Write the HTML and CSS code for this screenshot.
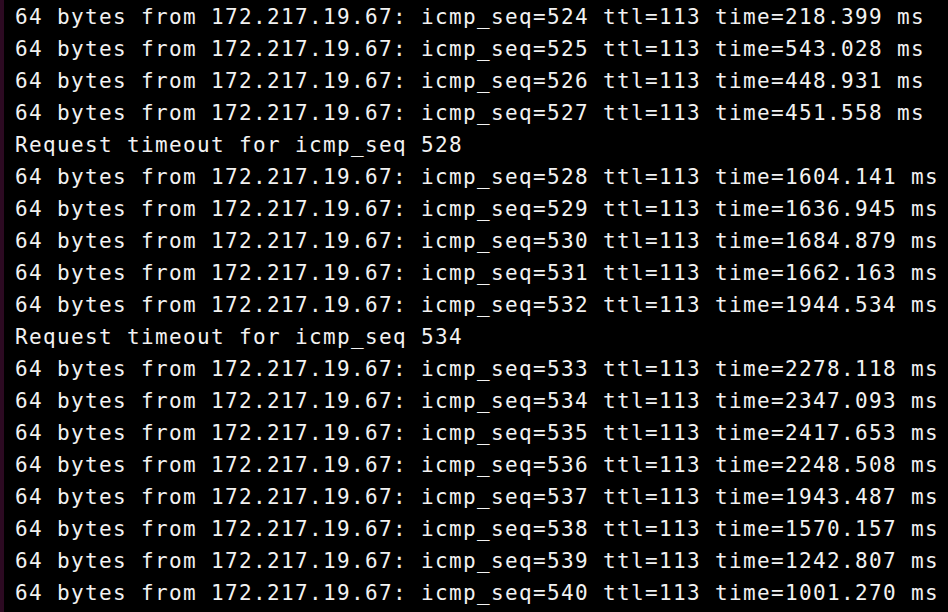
FILE: index.html
```html
<!DOCTYPE html>
<html>
<head>
<meta charset="utf-8">
<link rel="stylesheet" href="styles.css">
</head>
<body>
<div class="term">
<div class="edge"></div>
<pre class="out">64 bytes from 172.217.19.67: icmp_seq=524 ttl=113 time=218.399 ms
64 bytes from 172.217.19.67: icmp_seq=525 ttl=113 time=543.028 ms
64 bytes from 172.217.19.67: icmp_seq=526 ttl=113 time=448.931 ms
64 bytes from 172.217.19.67: icmp_seq=527 ttl=113 time=451.558 ms
Request timeout for icmp_seq 528
64 bytes from 172.217.19.67: icmp_seq=528 ttl=113 time=1604.141 ms
64 bytes from 172.217.19.67: icmp_seq=529 ttl=113 time=1636.945 ms
64 bytes from 172.217.19.67: icmp_seq=530 ttl=113 time=1684.879 ms
64 bytes from 172.217.19.67: icmp_seq=531 ttl=113 time=1662.163 ms
64 bytes from 172.217.19.67: icmp_seq=532 ttl=113 time=1944.534 ms
Request timeout for icmp_seq 534
64 bytes from 172.217.19.67: icmp_seq=533 ttl=113 time=2278.118 ms
64 bytes from 172.217.19.67: icmp_seq=534 ttl=113 time=2347.093 ms
64 bytes from 172.217.19.67: icmp_seq=535 ttl=113 time=2417.653 ms
64 bytes from 172.217.19.67: icmp_seq=536 ttl=113 time=2248.508 ms
64 bytes from 172.217.19.67: icmp_seq=537 ttl=113 time=1943.487 ms
64 bytes from 172.217.19.67: icmp_seq=538 ttl=113 time=1570.157 ms
64 bytes from 172.217.19.67: icmp_seq=539 ttl=113 time=1242.807 ms
64 bytes from 172.217.19.67: icmp_seq=540 ttl=113 time=1001.270 ms</pre>
</div>
</body>
</html>
```
FILE: styles.css
```css
html, body {
  margin: 0;
  padding: 0;
  background: #000;
  width: 948px;
  height: 612px;
  overflow: hidden;
}
.term {
  display: flex;
  height: 612px;
  background: #000;
}
.edge {
  width: 4px;
  flex: none;
  background: #2c0a22;
}
.out {
  margin: 0;
  padding: 1px 0 0 11px;
  font-family: "DejaVu Sans Mono", monospace;
  font-size: 21px;
  line-height: 32px;
  letter-spacing: 1.358px;
  color: #f2f2f2;
  white-space: pre;
}
```
